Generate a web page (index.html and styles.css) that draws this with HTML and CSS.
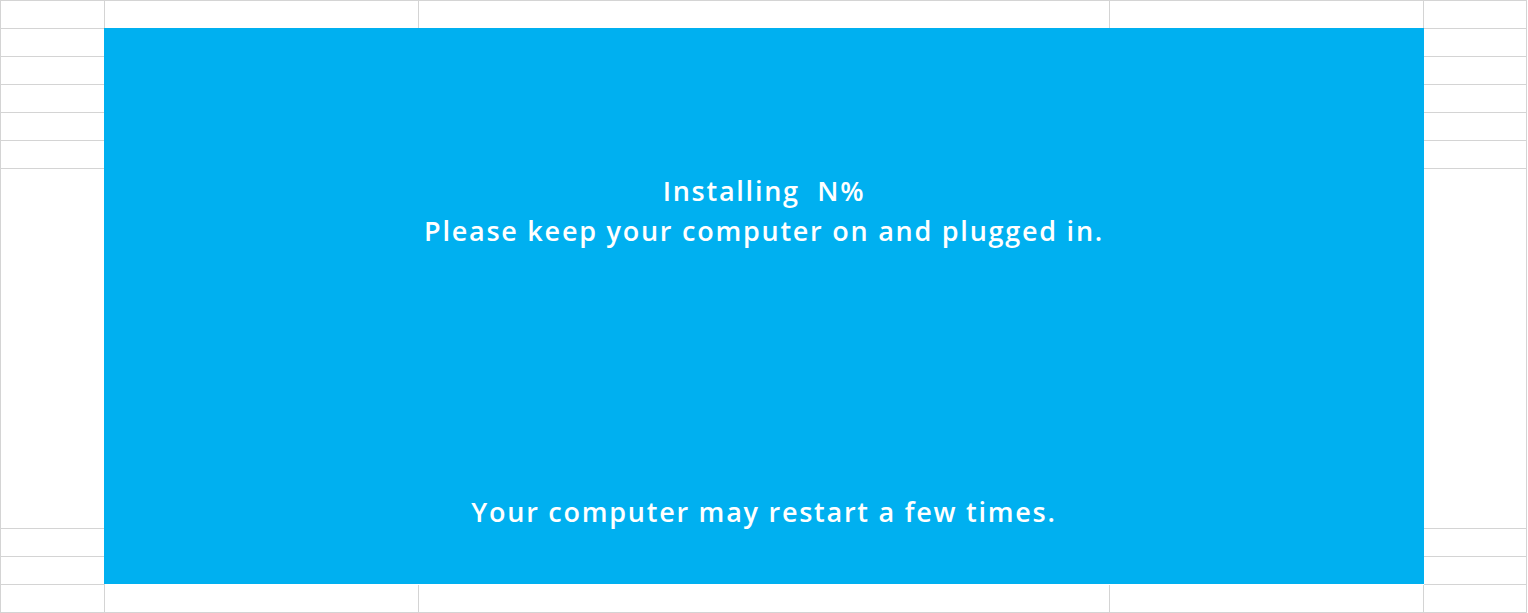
FILE: index.html
```html
<!DOCTYPE html>
<html>
<head>
<meta charset="utf-8">
<link rel="stylesheet" href="styles.css">
</head>
<body>
<div class="sheet">
  <div class="cell c1 r1"></div>
  <div class="cell c2 r1"></div>
  <div class="cell c3 r1"></div>
  <div class="cell c4 r1"></div>
  <div class="cell c5 r1"></div>

  <div class="cell c1 r2"></div>
  <div class="cell c1 r3"></div>
  <div class="cell c1 r4"></div>
  <div class="cell c1 r5"></div>
  <div class="cell c1 r6"></div>
  <div class="cell c1 r7"></div>
  <div class="cell c1 r8"></div>
  <div class="cell c1 r9"></div>
  <div class="cell c1 r10"></div>

  <div class="cell c5 r2"></div>
  <div class="cell c5 r3"></div>
  <div class="cell c5 r4"></div>
  <div class="cell c5 r5"></div>
  <div class="cell c5 r6"></div>
  <div class="cell c5 r7"></div>
  <div class="cell c5 r8"></div>
  <div class="cell c5 r9"></div>
  <div class="cell c5 r10"></div>

  <div class="cell c2 r10"></div>
  <div class="cell c3 r10"></div>
  <div class="cell c4 r10"></div>

  <div class="screen">
    <div class="msg">
      <p>Installing&nbsp; N%</p>
      <p>Please keep your computer on and plugged in.</p>
    </div>
    <p class="foot">Your computer may restart a few times.</p>
  </div>
</div>
</body>
</html>
```

FILE: styles.css
```css
html, body {
  margin: 0;
  padding: 0;
  background: #ffffff;
}

.sheet {
  display: grid;
  grid-template-columns: 104px 314px 691px 314px 103px;
  grid-template-rows: 28px 28px 28px 28px 28px 28px 360px 28px 28px 28px;
  border-top: 1px solid #d4d4d4;
  border-left: 1px solid #d4d4d4;
  width: max-content;
}

.cell {
  border-right: 1px solid #d4d4d4;
  border-bottom: 1px solid #d4d4d4;
  box-sizing: border-box;
}

.c1 { grid-column: 1; }
.c2 { grid-column: 2; }
.c3 { grid-column: 3; }
.c4 { grid-column: 4; }
.c5 { grid-column: 5; }
.r1 { grid-row: 1; }
.r2 { grid-row: 2; }
.r3 { grid-row: 3; }
.r4 { grid-row: 4; }
.r5 { grid-row: 5; }
.r6 { grid-row: 6; }
.r7 { grid-row: 7; }
.r8 { grid-row: 8; }
.r9 { grid-row: 9; }
.r10 { grid-row: 10; }

.screen {
  grid-column: 2 / 5;
  grid-row: 2 / 10;
  margin: -1px 0 1px -1px;
  background: #00b0f0;
  display: flex;
  flex-direction: column;
  align-items: center;
  padding: 143px 0 52px;
  box-sizing: border-box;
  color: #ffffff;
  font-family: "Open Sans", "Noto Sans", sans-serif;
  font-weight: 600;
  font-size: 27px;
  letter-spacing: 1.75px;
  line-height: 40px;
}

.screen p {
  margin: 0;
  text-align: center;
}

.msg {
  display: flex;
  flex-direction: column;
  align-items: center;
}

.foot {
  margin-top: auto !important;
}
```
